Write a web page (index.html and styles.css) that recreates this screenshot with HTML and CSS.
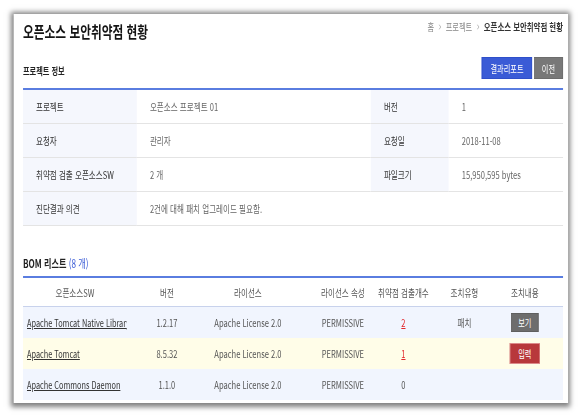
FILE: index.html
```html
<!DOCTYPE html>
<html lang="ko">
<head>
<meta charset="utf-8">
<title>오픈소스 보안취약점 현황</title>
<link rel="stylesheet" href="styles.css">
</head>
<body>
<div class="screen">
<div class="page">
  <div class="card">
    <div class="head">
      <h1 class="title">오픈소스 보안취약점 현황</h1>
      <nav class="crumbs">
        <span>홈</span>
        <svg class="sep" viewBox="0 0 4 6" width="4" height="6"><path d="M0.8 0.6 L3.2 3 L0.8 5.4" fill="none" stroke="#aaa" stroke-width="0.9"/></svg>
        <span>프로젝트</span>
        <svg class="sep" viewBox="0 0 4 6" width="4" height="6"><path d="M0.8 0.6 L3.2 3 L0.8 5.4" fill="none" stroke="#aaa" stroke-width="0.9"/></svg>
        <strong>오픈소스 보안취약점 현황</strong>
      </nav>
    </div>

    <div class="sec-head">
      <h2 class="sec-title">프로젝트 정보</h2>
      <div class="btns">
        <button class="btn btn-blue">결과리포트</button>
        <button class="btn btn-gray">이전</button>
      </div>
    </div>

    <div class="info">
      <div class="lab">프로젝트</div><div class="val">오픈소스 프로젝트 01</div>
      <div class="lab">버전</div><div class="val">1</div>
      <div class="lab">요청자</div><div class="val">관리자</div>
      <div class="lab">요청일</div><div class="val">2018-11-08</div>
      <div class="lab">취약점 검출 오픈소스SW</div><div class="val">2 개</div>
      <div class="lab">파일크기</div><div class="val">15,950,595 bytes</div>
      <div class="lab">진단결과 의견</div><div class="val wide">2건에 대해 패치 업그레이드 필요함.</div>
    </div>

    <h2 class="sec-title bom-title">BOM 리스트 <span class="count">(8 개)</span></h2>

    <div class="bom">
      <div class="row hdr">
        <div class="c c1">오픈소스SW</div>
        <div class="c c2">버전</div>
        <div class="c c3">라이선스</div>
        <div class="c c4">라이선스 속성</div>
        <div class="c c5">취약점 검출개수</div>
        <div class="c c6">조치유형</div>
        <div class="c c7">조치내용</div>
      </div>
      <div class="row odd">
        <div class="c c1 name"><a href="#">Apache Tomcat Native Library</a></div>
        <div class="c c2">1.2.17</div>
        <div class="c c3">Apache License 2.0</div>
        <div class="c c4">PERMISSIVE</div>
        <div class="c c5"><a class="hit" href="#">2</a></div>
        <div class="c c6">패치</div>
        <div class="c c7"><button class="act act-view">보기</button></div>
      </div>
      <div class="row warn">
        <div class="c c1 name"><a href="#">Apache Tomcat</a></div>
        <div class="c c2">8.5.32</div>
        <div class="c c3">Apache License 2.0</div>
        <div class="c c4">PERMISSIVE</div>
        <div class="c c5"><a class="hit" href="#">1</a></div>
        <div class="c c6"></div>
        <div class="c c7"><button class="act act-input">입력</button></div>
      </div>
      <div class="row odd">
        <div class="c c1 name"><a href="#">Apache Commons Daemon</a></div>
        <div class="c c2">1.1.0</div>
        <div class="c c3">Apache License 2.0</div>
        <div class="c c4">PERMISSIVE</div>
        <div class="c c5">0</div>
        <div class="c c6"></div>
        <div class="c c7"></div>
      </div>
    </div>
  </div>
</div>
</div>
</body>
</html>
```

FILE: styles.css
```css
html, body {
  margin: 0;
  padding: 0;
  background: #ffffff;
  overflow: hidden;
}

body {
  font-family: "Noto Sans CJK KR", "Noto Sans", sans-serif;
  color: #444;
}

.screen {
  width: 584px;
  height: 419px;
  overflow: hidden;
}

/* the whole screen is rendered horizontally condensed */
.page {
  width: 811px;
  padding: 14px 0 0 19.4px;
  box-sizing: border-box;
  transform: scaleX(0.72);
  transform-origin: 0 0;
}

.card {
  width: 769.4px;
  box-sizing: border-box;
  padding: 7px 6.9px 3px 12.5px;
  background: #fff;
  box-shadow: -1px 1px 6px 3px rgba(0, 0, 0, 0.5);
}

.head {
  display: flex;
  justify-content: space-between;
  align-items: flex-start;
}

.title {
  margin: 0;
  font-size: 16.3px;
  line-height: 20px;
  font-weight: 700;
  color: #151515;
}

.crumbs {
  margin-top: -1px;
  display: flex;
  align-items: center;
  gap: 6px;
  font-size: 10px;
  line-height: 14px;
  color: #888;
}

.crumbs strong {
  color: #333;
  font-weight: 700;
  font-size: 10.3px;
}

.sep {
  display: block;
}

.sec-head {
  margin-top: 16px;
  margin-bottom: 9px;
  display: flex;
  justify-content: space-between;
  align-items: flex-end;
}

.sec-title {
  margin: 0;
  font-size: 10px;
  line-height: 16px;
  font-weight: 700;
  color: #222;
}

.btns {
  display: flex;
  gap: 2.8px;
}

.btn {
  height: 22px;
  border: 1px solid transparent;
  padding: 0;
  font-family: inherit;
  font-size: 10px;
  color: #fff;
  cursor: pointer;
}

.btn-blue {
  width: 69.4px;
  background: #3a5bd6;
  border-color: #2f4fc9;
}

.btn-gray {
  width: 40.3px;
  background: #787878;
  border-color: #6c6c6c;
}

.info {
  display: grid;
  grid-template-columns: 158.3px 325px 108.3px 158.3px;
  border-top: 2px solid #5a7de0;
}

.info > div {
  height: 33px;
  border-bottom: 1px solid #e4e4e4;
  display: flex;
  align-items: center;
  padding-left: 18px;
  font-size: 10.5px;
  white-space: nowrap;
}

.lab {
  background: #f5f7fd;
  color: #333;
}

.val {
  color: #666;
}

.val.wide {
  grid-column: span 3;
}

.bom-title {
  margin-top: 28.5px;
  margin-bottom: 5.5px;
  font-size: 11.3px;
}

.count {
  font-weight: 400;
  font-size: 11.3px;
  color: #3a5bd6;
}

.bom {
  border-top: 2px solid #5a7de0;
}

.row {
  display: grid;
  grid-template-columns: 144.4px 111.1px 113.9px 116.7px 84.7px 84.7px 94.4px;
  height: 31px;
  font-size: 10.5px;
  color: #555;
}

.row.hdr {
  height: 28px;
  border-bottom: 1px solid #c8d2ec;
  background: #fff;
}

.row.odd {
  background: #f1f5fe;
}

.row.warn {
  background: #fffde8;
}

.c {
  display: flex;
  align-items: center;
  justify-content: center;
  white-space: nowrap;
  overflow: hidden;
}

.c4 {
  padding-left: 33.3px;
}

.c7 {
  padding-right: 11.1px;
}

.c.name {
  justify-content: flex-start;
  padding-left: 5.6px;
  font-size: 10.2px;
}

.name a {
  color: #333;
  text-decoration: underline;
}

.hit {
  color: #e2282c;
  text-decoration: underline;
}

.act {
  padding: 0;
  border: 1px solid transparent;
  font-family: inherit;
  font-size: 10px;
  color: #fff;
  cursor: pointer;
}

.act-view {
  width: 38.9px;
  height: 19px;
  background: #6d6d6d;
  border-color: #5f5f5f;
}

.act-input {
  width: 41.7px;
  height: 21px;
  background: #b8383b;
  border-color: #dc8a8a;
}
```
